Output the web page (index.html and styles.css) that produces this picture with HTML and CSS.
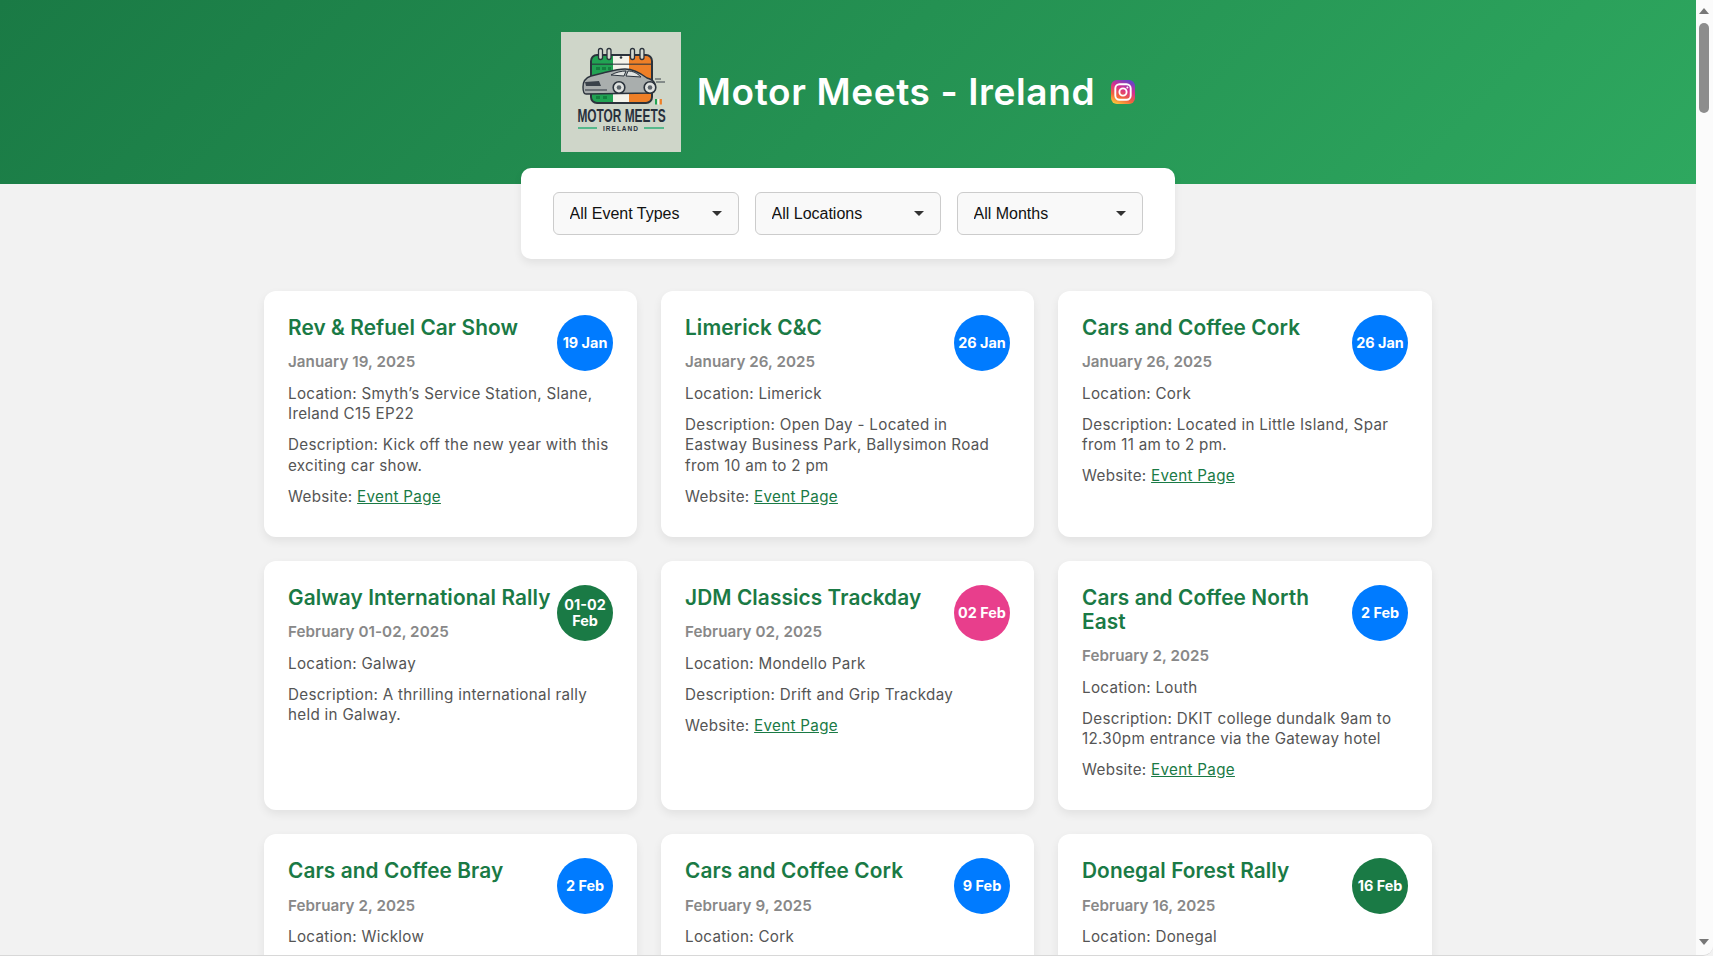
FILE: index.html
```html
<!DOCTYPE html>
<html lang="en">
<head>
<meta charset="utf-8">
<title>Motor Meets - Ireland</title>
<link rel="stylesheet" href="styles.css">
</head>
<body>
<div class="frame">
<div class="page">
  <header class="hero">
    <svg class="logo" viewBox="0 0 120 120" role="img" aria-label="Motor Meets Ireland logo">
      <rect width="120" height="120" fill="#cfd6c9"/>
      <rect x="29" y="22" width="63" height="50" rx="7" fill="#2b333c"/>
      <path d="M52 24H36a5 5 0 0 0-5 5v36a5 5 0 0 0 5 5h16z" fill="#21a353"/>
      <rect x="52" y="24" width="16" height="46" fill="#f4f3ea"/>
      <path d="M68 24h17a5 5 0 0 1 5 5v36a5 5 0 0 1-5 5H68z" fill="#ee7f27"/>
      <rect x="31" y="31.500" width="59" height="1.500" fill="#2b333c" opacity="0.700"/>
      <g fill="#14803f"><rect x="35" y="35" width="4" height="3"/><rect x="41" y="35" width="4" height="3"/><rect x="47" y="35" width="3" height="3"/><rect x="35" y="64" width="4" height="3"/><rect x="42" y="64" width="4" height="3"/></g>
      <g fill="#d5dad0" stroke="#2b333c" stroke-width="1.300">
        <rect x="37.500" y="16.500" width="4" height="11" rx="2"/>
        <rect x="46" y="16.500" width="4" height="11" rx="2"/>
        <rect x="69.500" y="16.500" width="4" height="11" rx="2"/>
        <rect x="79" y="16.500" width="4" height="11" rx="2"/>
      </g>
      <circle cx="60" cy="25.500" r="1.300" fill="#2b333c"/>
      <path d="M22 55c0-5 2-9 8-11l12-3c8-2 14-4 22-4 8 0 14 3 22 9 4 1 7 3 8 6 1 4 0 8-3 9l-66 1c-2 0-3-3-3-7z" fill="#a9aead" stroke="#2b333c" stroke-width="1.400"/>
      <path d="M50 43c5-3 11-4 15-4l-2 5zM67 39c5 0 9 2 13 6l-15-1z" fill="#e0e3e1" stroke="#2b333c" stroke-width="1"/>
      <path d="M24 50l14-1 2 5H25z" fill="#3a424a"/>
      <path d="M24 58h22" stroke="#2b333c" stroke-width="1"/>
      <path d="M95 50h9M94 47h6" stroke="#3a424a" stroke-width="1"/>
      <g fill="#dfe2df" stroke="#2b333c" stroke-width="1.600">
        <circle cx="58" cy="55.500" r="5.800"/>
        <circle cx="89" cy="55.500" r="5.800"/>
      </g>
      <g fill="#5c646b"><circle cx="58" cy="55.500" r="2.300"/><circle cx="89" cy="55.500" r="2.300"/></g>
      <rect x="94" y="67" width="2.300" height="5.500" fill="#21a353"/><rect x="96.300" y="67" width="2.300" height="5.500" fill="#f4f3ea"/><rect x="98.600" y="67" width="2.300" height="5.500" fill="#ee7f27"/>
      <text class="logo-title" transform="translate(60.500 90) scale(0.660 1)" text-anchor="middle">MOTOR MEETS</text>
      <path d="M17 96h19M83 96h20" stroke="#2faf77" stroke-width="1.300"/>
      <text class="logo-sub" x="60" y="98.500" text-anchor="middle">IRELAND</text>
    </svg>
    <h1 class="site-title">Motor Meets - Ireland</h1>
    <svg class="insta" viewBox="0 0 24 24" role="img" aria-label="Instagram">
      <defs>
        <linearGradient id="ig" x1="0.200" y1="1" x2="0.650" y2="0">
          <stop offset="0" stop-color="#fdc83c"/>
          <stop offset="0.300" stop-color="#f2653a"/>
          <stop offset="0.650" stop-color="#d62f8f"/>
          <stop offset="1" stop-color="#6a42c8"/>
        </linearGradient>
      </defs>
      <rect width="24" height="24" rx="6" fill="url(#ig)"/>
      <rect x="4.300" y="4.300" width="15.400" height="15.400" rx="4.200" fill="none" stroke="#fff" stroke-width="1.900"/>
      <circle cx="12" cy="12" r="3.600" fill="none" stroke="#fff" stroke-width="1.900"/>
      <circle cx="16.400" cy="7.600" r="1" fill="#fff"/>
    </svg>
  </header>

  <section class="filters">
    <div class="select-box"><select><option>All Event Types</option></select></div>
    <div class="select-box"><select><option>All Locations</option></select></div>
    <div class="select-box"><select><option>All Months</option></select></div>
  </section>

  <main class="grid">
    <article class="card">
      <span class="badge">19 Jan</span>
      <h2>Rev &amp; Refuel Car Show</h2>
      <p class="date">January 19, 2025</p>
      <p>Location: Smyth’s Service Station, Slane,<br>Ireland C15 EP22</p>
      <p>Description: Kick off the new year with this<br>exciting car show.</p>
      <p>Website: <a href="#">Event Page</a></p>
    </article>
    <article class="card">
      <span class="badge">26 Jan</span>
      <h2>Limerick C&amp;C</h2>
      <p class="date">January 26, 2025</p>
      <p>Location: Limerick</p>
      <p>Description: Open Day - Located in<br>Eastway Business Park, Ballysimon Road<br>from 10 am to 2 pm</p>
      <p>Website: <a href="#">Event Page</a></p>
    </article>
    <article class="card">
      <span class="badge">26 Jan</span>
      <h2>Cars and Coffee Cork</h2>
      <p class="date">January 26, 2025</p>
      <p>Location: Cork</p>
      <p>Description: Located in Little Island, Spar<br>from 11 am to 2 pm.</p>
      <p>Website: <a href="#">Event Page</a></p>
    </article>

    <article class="card">
      <span class="badge badge-green">01-02 Feb</span>
      <h2>Galway International Rally</h2>
      <p class="date">February 01-02, 2025</p>
      <p>Location: Galway</p>
      <p>Description: A thrilling international rally<br>held in Galway.</p>
    </article>
    <article class="card">
      <span class="badge badge-pink">02 Feb</span>
      <h2>JDM Classics Trackday</h2>
      <p class="date">February 02, 2025</p>
      <p>Location: Mondello Park</p>
      <p>Description: Drift and Grip Trackday</p>
      <p>Website: <a href="#">Event Page</a></p>
    </article>
    <article class="card">
      <span class="badge">2 Feb</span>
      <h2>Cars and Coffee North<br>East</h2>
      <p class="date">February 2, 2025</p>
      <p>Location: Louth</p>
      <p>Description: DKIT college dundalk 9am to<br>12.30pm entrance via the Gateway hotel</p>
      <p>Website: <a href="#">Event Page</a></p>
    </article>

    <article class="card">
      <span class="badge">2 Feb</span>
      <h2>Cars and Coffee Bray</h2>
      <p class="date">February 2, 2025</p>
      <p>Location: Wicklow</p>
    </article>
    <article class="card">
      <span class="badge">9 Feb</span>
      <h2>Cars and Coffee Cork</h2>
      <p class="date">February 9, 2025</p>
      <p>Location: Cork</p>
    </article>
    <article class="card">
      <span class="badge badge-green">16 Feb</span>
      <h2>Donegal Forest Rally</h2>
      <p class="date">February 16, 2025</p>
      <p>Location: Donegal</p>
    </article>
  </main>
</div>
<div class="scrollbar" aria-hidden="true">
  <span class="arrow-up"></span>
  <span class="thumb"></span>
  <span class="arrow-down"></span>
</div>
</div>
</body>
</html>
```

FILE: styles.css
```css
* { box-sizing: border-box; }

html, body {
  margin: 0;
  height: 100%;
  overflow: hidden;
}

body {
  background: #f2f2f2;
  color: #555;
  font-family: Inter, "Liberation Sans", sans-serif;
}

.frame {
  display: flex;
  height: 956px;
  border-bottom: 1px solid #d8d8d8;
  border-bottom-right-radius: 10px;
  overflow: hidden;
}

.page {
  flex: 1;
  min-width: 0;
  overflow: hidden;
}

.hero {
  height: 184px;
  padding: 32px 0;
  display: flex;
  align-items: center;
  justify-content: center;
  gap: 16px;
  background: linear-gradient(135deg, #1a7a45, #2ea85f);
}

.logo {
  width: 120px;
  height: 120px;
  flex: none;
}

.logo-title {
  font: 700 18px "Liberation Sans", sans-serif;
  fill: #27303c;
}

.logo-sub {
  font: 700 6.500px "Liberation Sans", sans-serif;
  letter-spacing: 1px;
  fill: #27303c;
}

.site-title {
  margin: 0;
  color: #fff;
  font-size: 37px;
  line-height: 44px;
  font-weight: 600;
  letter-spacing: 0.620px;
  white-space: nowrap;
}

.insta {
  width: 24px;
  height: 24px;
  flex: none;
}

.filters {
  width: 654px;
  margin: -16px auto 0;
  padding: 24px 32px;
  position: relative;
  display: flex;
  gap: 16px;
  background: #fff;
  border-radius: 10px;
  box-shadow: 0 4px 8px rgba(0, 0, 0, 0.07);
}

.select-box {
  position: relative;
  flex: 1;
}

.select-box::after {
  content: "";
  position: absolute;
  right: 17px;
  top: 19px;
  border-left: 5px solid transparent;
  border-right: 5px solid transparent;
  border-top: 5px solid #333;
  pointer-events: none;
}

.select-box select {
  width: 100%;
  height: 43px;
  padding: 0 15.500px;
  appearance: none;
  background: #f9f9f9;
  border: 1px solid #ccc;
  border-radius: 6px;
  color: #111;
  font: 16px "Liberation Sans", sans-serif;
}

.grid {
  width: 1168px;
  margin: 32px auto 0;
  display: grid;
  grid-template-columns: 373px 373px 374px;
  gap: 24px;
}

.card {
  position: relative;
  padding: 24px 24px 19px;
  background: #fff;
  border-radius: 12px;
  box-shadow: 0 4px 10px rgba(0, 0, 0, 0.07);
}

.card h2 {
  margin: 0 0 12.600px;
  padding-top: 0.500px;
  color: #1a7a45;
  font-size: 20.800px;
  line-height: 24px;
  font-weight: 600;
  letter-spacing: 0.100px;
  white-space: nowrap;
}

.card p {
  margin: 0 0 10.200px;
  font-size: 15.200px;
  line-height: 20.800px;
  letter-spacing: 0.300px;
  white-space: nowrap;
}

.card .date {
  margin-bottom: 10.700px;
  color: #888;
  font-weight: 600;
  letter-spacing: 0.050px;
}

.card a {
  color: #1a7a45;
}

.badge {
  position: absolute;
  top: 24px;
  right: 24px;
  width: 56px;
  height: 56px;
  padding: 0 2px;
  display: flex;
  align-items: center;
  justify-content: center;
  text-align: center;
  border-radius: 50%;
  background: #007bff;
  color: #fff;
  font-size: 14.400px;
  line-height: 16.500px;
  font-weight: 700;
}

.badge-green { background: #1a7a45; }
.badge-pink { background: #e83e8c; }

.scrollbar {
  width: 17px;
  flex: none;
  position: relative;
  background: #fbfbfb;
}

.thumb {
  position: absolute;
  top: 23px;
  left: 3px;
  width: 10px;
  height: 90px;
  border-radius: 5px;
  background: #8d8d8d;
}

.arrow-up, .arrow-down {
  position: absolute;
  left: 3px;
  border-left: 5px solid transparent;
  border-right: 5px solid transparent;
}

.arrow-up {
  top: 8px;
  border-bottom: 6px solid #777;
}

.arrow-down {
  bottom: 10px;
  border-top: 6px solid #777;
}
```
